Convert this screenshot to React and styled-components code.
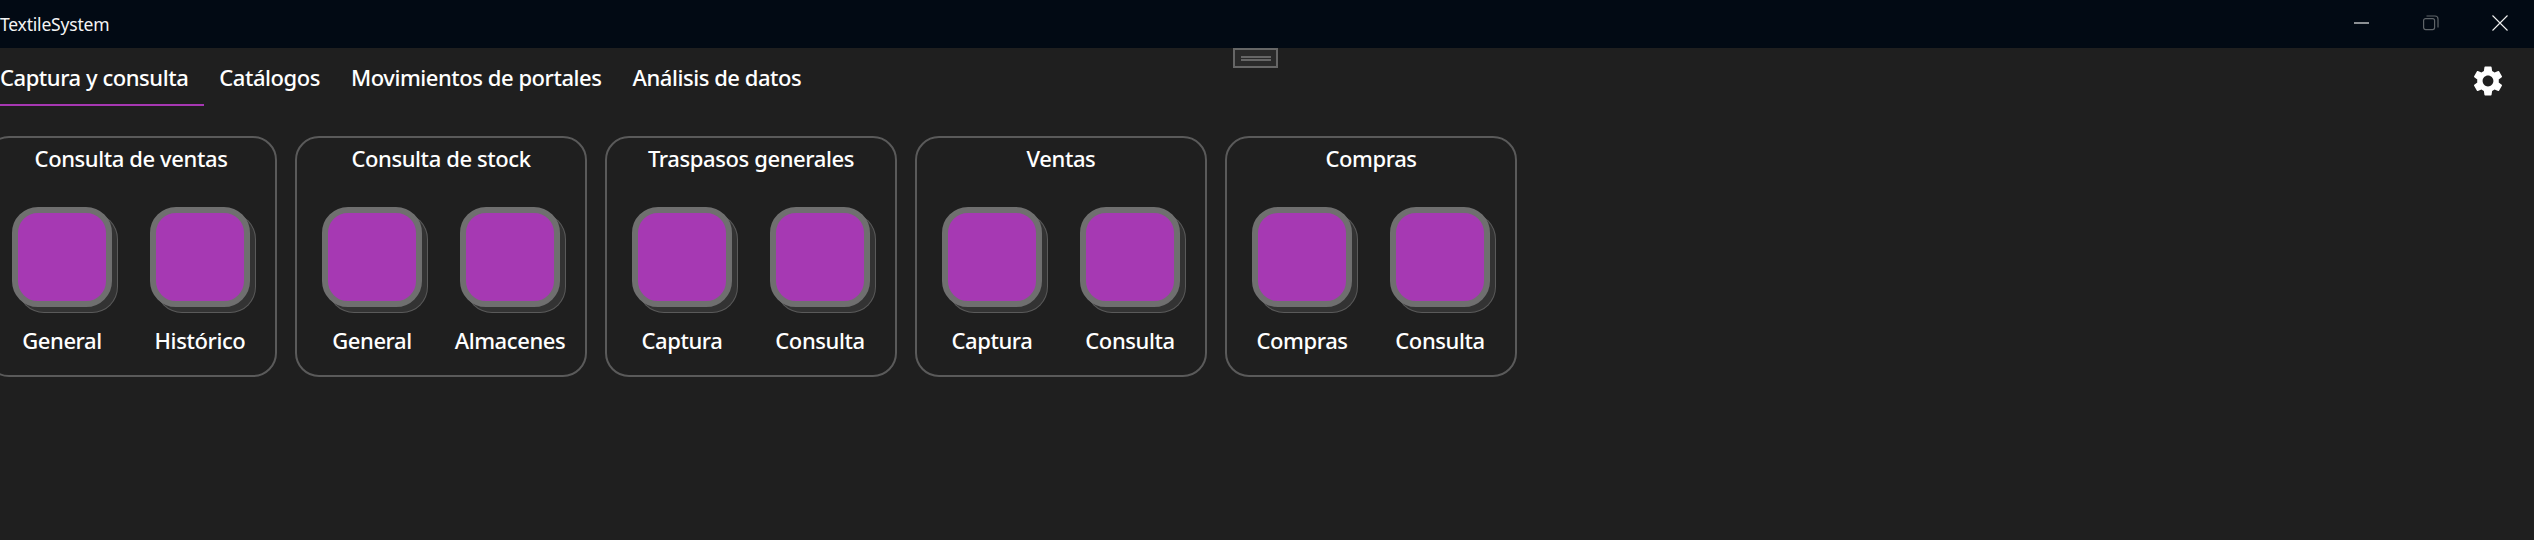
import React from "react";
import styled, { createGlobalStyle } from "styled-components";
import { MdSettings } from "react-icons/md";

const GlobalStyle = createGlobalStyle`
  html, body {
    margin: 0;
    padding: 0;
    background: #1f1f1f;
    overflow: hidden;
  }
  * { box-sizing: border-box; }
`;

const groups = [
  { title: "Consulta de ventas", items: ["General", "Histórico"] },
  { title: "Consulta de stock", items: ["General", "Almacenes"] },
  { title: "Traspasos generales", items: ["Captura", "Consulta"] },
  { title: "Ventas", items: ["Captura", "Consulta"] },
  { title: "Compras", items: ["Compras", "Consulta"] },
];

const tabs = ["Captura y consulta", "Catálogos", "Movimientos de portales", "Análisis de datos"];

export default function App() {
  return (
    <>
      <GlobalStyle />
      <Page>
        <TitleBar>
          <AppName>TextileSystem</AppName>
          <WindowButtons>
            <WindowButton>
              <svg width="16" height="16" viewBox="0 0 16 16">
                <path d="M0 8h15" stroke="#e8e8e8" strokeWidth="1.2" />
              </svg>
            </WindowButton>
            <WindowButton>
              <svg width="16" height="16" viewBox="0 0 16 16" fill="none" stroke="#5f6468" strokeWidth="1.2">
                <rect x="0.6" y="3.6" width="11" height="11" rx="2" />
                <path d="M3.5 1h8.5a3 3 0 0 1 3 3v8.5" />
              </svg>
            </WindowButton>
            <WindowButton>
              <svg width="16" height="16" viewBox="0 0 16 16">
                <path d="M0.5 0.5l15 15M15.500 0.5l-15 15" stroke="#f0f0f0" strokeWidth="1.1" />
              </svg>
            </WindowButton>
          </WindowButtons>
        </TitleBar>
        <CollapseHandle>
          <HandleLine />
          <HandleLine />
        </CollapseHandle>
        <TabRow>
          {tabs.map((t, i) => (
            <Tab key={t} $active={i === 0}>{t}</Tab>
          ))}
          <SettingsButton>
            <MdSettings size={36} color="#ffffff" />
          </SettingsButton>
        </TabRow>
        <Ribbon>
          {groups.map((g) => (
            <Group key={g.title}>
              <GroupTitle>{g.title}</GroupTitle>
              <Tiles>
                {g.items.map((label) => (
                  <Tile key={label}>
                    <TileButton />
                    <TileLabel>{label}</TileLabel>
                  </Tile>
                ))}
              </Tiles>
            </Group>
          ))}
        </Ribbon>
      </Page>
    </>
  );
}

const Page = styled.div`
  position: relative;
  width: 2534px;
  height: 540px;
  background: #1f1f1f;
  color: #ffffff;
  font-family: "Noto Sans", "Open Sans", sans-serif;
  overflow: hidden;
`;

const TitleBar = styled.div`
  display: flex;
  align-items: center;
  justify-content: space-between;
  height: 48px;
  background: #020a14;
`;

const AppName = styled.span`
  font-size: 17.5px;
  letter-spacing: -0.2px;
  color: #f4f4f4;
`;

const WindowButtons = styled.div`
  display: flex;
  gap: 53px;
  padding-right: 26px;
  margin-top: -2px;
`;

const WindowButton = styled.div`
  display: flex;
  width: 16px;
  height: 16px;
`;

const CollapseHandle = styled.div`
  position: absolute;
  left: 1233px;
  top: 48px;
  width: 45px;
  height: 20px;
  border: 2px solid #666666;
  background: #2a2a2a;
  display: flex;
  flex-direction: column;
  align-items: center;
  justify-content: center;
  gap: 1px;
`;

const HandleLine = styled.div`
  width: 30px;
  height: 2px;
  background: #666666;
`;

const TabRow = styled.div`
  display: flex;
  align-items: flex-start;
  height: 58px;
`;

const Tab = styled.div`
  height: 58px;
  padding: 14px 16px 0 0;
  margin-right: 15px;
  font-size: 22px;
  font-weight: 500;
  letter-spacing: -0.45px;
  line-height: 30px;
  white-space: nowrap;
  color: #ffffff;
  border-bottom: 2px solid ${(p) => (p.$active ? "#a637b2" : "transparent")};
`;

const SettingsButton = styled.div`
  display: flex;
  margin-left: auto;
  margin-right: 28px;
  margin-top: 15px;
`;

const Ribbon = styled.div`
  display: flex;
  gap: 18px;
  margin: 30px 0 0 -15px;
`;

const Group = styled.div`
  width: 292px;
  height: 241px;
  border: 2px solid #5a5a5a;
  border-radius: 24px;
  padding-top: 6px;
`;

const GroupTitle = styled.div`
  text-align: center;
  font-size: 22px;
  font-weight: 500;
  letter-spacing: -0.4px;
  line-height: 28px;
`;

const Tiles = styled.div`
  display: flex;
  gap: 38px;
  padding-left: 25px;
  margin-top: 35px;
`;

const Tile = styled.div`
  display: flex;
  flex-direction: column;
  align-items: center;
  width: 100px;
`;

const TileButton = styled.div`
  width: 100px;
  height: 100px;
  background: #a639b3;
  border: 6px solid #6f6f6f;
  border-radius: 26px;
  box-shadow: 6px 6px 0 -1px #333333, 6px 6px 0 0 #5a5a5a;
`;

const TileLabel = styled.div`
  margin-top: 19px;
  font-size: 22px;
  font-weight: 500;
  letter-spacing: -0.4px;
  line-height: 28px;
  white-space: nowrap;
`;
